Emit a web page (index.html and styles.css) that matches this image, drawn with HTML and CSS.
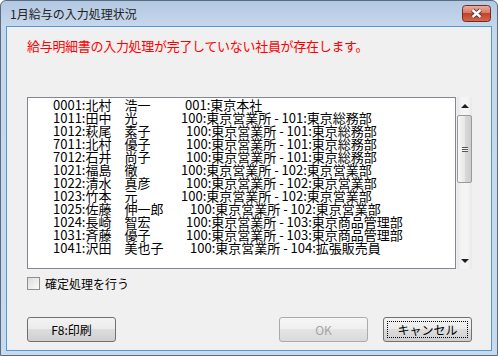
FILE: index.html
```html
<!DOCTYPE html>
<html lang="ja">
<head>
    <meta charset="UTF-8">
    <meta name="viewport" content="width=device-width, initial-scale=1.0">
    <title>1月給与の入力処理状況</title>
    <link rel="stylesheet" href="styles.css">
</head>
<body>
    <div class="window">
        <div class="titlebar">
            <span class="title">1月給与の入力処理状況</span>
            <button class="close-btn" type="button" aria-label="閉じる">
                <svg width="29" height="17" viewBox="0 0 29 17">
                    <defs>
                        <linearGradient id="closeGrad" x1="0" y1="0" x2="0" y2="1">
                            <stop offset="0" stop-color="#eab0a2"/>
                            <stop offset="0.45" stop-color="#d77a64"/>
                            <stop offset="0.5" stop-color="#c2432b"/>
                            <stop offset="1" stop-color="#d8684d"/>
                        </linearGradient>
                    </defs>
                    <rect x="0.5" y="0.5" width="28" height="16" rx="3" fill="url(#closeGrad)" stroke="#6b3127"/>
                    <path d="M10.5 5 L18.5 12 M18.5 5 L10.5 12" stroke="#4b2520" stroke-width="4.2"/>
                    <path d="M10.5 5 L18.5 12 M18.5 5 L10.5 12" stroke="#ffffff" stroke-width="2.4"/>
                </svg>
            </button>
        </div>

        <div class="client">
            <p class="message">給与明細書の入力処理が完了していない社員が存在します。</p>

            <div class="listbox">
                <div class="list">
                    <div class="row"><span class="emp">0001:北村　浩一</span><span class="dept off4">001:東京本社</span></div>
                    <div class="row"><span class="emp">1011:田中　光</span><span class="dept">100:東京営業所 - 101:東京総務部</span></div>
                    <div class="row"><span class="emp">1012:萩尾　素子</span><span class="dept off5">100:東京営業所 - 101:東京総務部</span></div>
                    <div class="row"><span class="emp">7011:北村　優子</span><span class="dept off5">100:東京営業所 - 101:東京総務部</span></div>
                    <div class="row"><span class="emp">7012:石井　尚子</span><span class="dept off5">100:東京営業所 - 101:東京総務部</span></div>
                    <div class="row"><span class="emp">1021:福島　徹</span><span class="dept">100:東京営業所 - 102:東京営業部</span></div>
                    <div class="row"><span class="emp">1022:清水　真彦</span><span class="dept off5">100:東京営業所 - 102:東京営業部</span></div>
                    <div class="row"><span class="emp">1023:竹本　元</span><span class="dept">100:東京営業所 - 102:東京営業部</span></div>
                    <div class="row"><span class="emp">1025:佐藤　伸一郎</span><span class="dept off9">100:東京営業所 - 102:東京営業部</span></div>
                    <div class="row"><span class="emp">1024:長崎　智宏</span><span class="dept off5">100:東京営業所 - 103:東京商品管理部</span></div>
                    <div class="row"><span class="emp">1031:斉藤　優子</span><span class="dept off5">100:東京営業所 - 103:東京商品管理部</span></div>
                    <div class="row"><span class="emp">1041:沢田　美也子</span><span class="dept off9">100:東京営業所 - 104:拡張販売員</span></div>
                </div>
                <div class="scrollbar">
                    <span class="arrow"><span class="tri-up"></span></span>
                    <span class="thumb"><span class="grip"></span></span>
                    <span class="track"></span>
                    <span class="arrow"><span class="tri-down"></span></span>
                </div>
            </div>

            <label class="check">
                <span class="box"></span>
                確定処理を行う
            </label>

            <div class="buttons">
                <button class="btn" type="button">F8:印刷</button>
                <button class="btn ok" type="button" disabled>OK</button>
                <button class="btn focused" type="button"><span class="focus-ring">キャンセル</span></button>
            </div>
        </div>
    </div>
</body>
</html>
```

FILE: styles.css
```css
* {
    box-sizing: border-box;
}
html, body {
    margin: 0;
}
body {
    width: 498px;
    height: 356px;
    overflow: hidden;
    font-family: "Noto Sans CJK JP", "Liberation Sans", sans-serif;
    color: #000;
}
.window {
    height: 356px;
    display: flex;
    flex-direction: column;
    padding: 0 5px 4px 5px;
    border: 1px solid #5b6c82;
    border-radius: 6px 6px 0 0;
    background: linear-gradient(#b3c8e2, #c6d7ec 25px, #c9daee);
}
.titlebar {
    height: 25px;
    display: flex;
    align-items: flex-start;
    padding-left: 4px;
}
.title {
    margin-top: 5px;
    font-size: 12px;
    line-height: 16px;
    color: #222;
}
.close-btn {
    margin: 4px 1px 0 auto;
    padding: 0;
    border: 0;
    background: none;
    width: 29px;
    height: 17px;
}
.close-btn svg {
    display: block;
}
.client {
    flex: 1;
    display: flex;
    flex-direction: column;
    padding: 11px 19px 0 20px;
    background: #f0f0f0;
    border: 1px solid #4f9ad8;
}
.message {
    margin: 0;
    font-size: 13px;
    line-height: 16px;
    letter-spacing: -0.3px;
    color: #ff0000;
}

/* リストボックス */
.listbox {
    margin-top: 43px;
    height: 172px;
    display: flex;
}
.list {
    width: 429px;
    border: 1px solid #828790;
    background: #fff;
    padding-left: 25px;
}
.row {
    display: flex;
    white-space: nowrap;
    font-size: 13px;
    line-height: 13px;
}
.emp {
    width: 128px;
    flex: none;
}
.off4 { margin-left: 4px; }
.off5 { margin-left: 5px; }
.off9 { margin-left: 9px; }

.scrollbar {
    width: 15px;
    margin-left: 1px;
    display: flex;
    flex-direction: column;
    background: linear-gradient(to right, #e6e6e6, #f4f4f4 30%, #f4f4f4 70%, #e9e9e9);
}
.arrow {
    height: 17px;
    display: flex;
    align-items: center;
    justify-content: center;
}
.tri-up {
    border-left: 4px solid transparent;
    border-right: 4px solid transparent;
    border-bottom: 4px solid #1e1e1e;
}
.tri-down {
    border-left: 4px solid transparent;
    border-right: 4px solid transparent;
    border-top: 4px solid #1e1e1e;
}
.thumb {
    margin-top: 1px;
    height: 68px;
    border: 1px solid #9a9a9a;
    border-radius: 2px;
    background: linear-gradient(to right, #f6f6f6, #e8e8e8 50%, #d9d9d9 51%, #cdcdcd);
    display: flex;
    align-items: center;
    justify-content: center;
}
.grip {
    width: 6px;
    height: 5px;
    background: repeating-linear-gradient(#555 0, #555 1px, #f2f2f2 1px, #f2f2f2 2px);
}
.track {
    flex: 1;
}

/* チェックボックス */
.check {
    margin-top: 8px;
    height: 13px;
    display: flex;
    align-items: center;
    gap: 5px;
    font-size: 12px;
    line-height: 13px;
}
.box {
    width: 13px;
    height: 13px;
    border: 1px solid #8e8f8f;
    background: linear-gradient(135deg, #dcdcdc, #fbfbfb);
}

/* ボタン */
.buttons {
    margin-top: 27px;
    display: flex;
    gap: 15px;
}
.btn {
    width: 89px;
    height: 25px;
    padding: 0;
    border: 1px solid #707070;
    border-radius: 3px;
    background: linear-gradient(#f3f3f3, #ebebeb 48%, #dddddd 50%, #cfcfcf);
    font-family: inherit;
    font-size: 12px;
    color: #000;
}
.ok {
    margin-left: auto;
    border-color: #a8acaf;
    background: linear-gradient(#f6f6f6, #efefef 48%, #e4e4e4 50%, #dadada);
    color: #a3a3a3;
}
.focused {
    padding: 3px;
}
.focus-ring {
    display: flex;
    align-items: center;
    justify-content: center;
    height: 100%;
    border: 1px dotted #000;
}
```
